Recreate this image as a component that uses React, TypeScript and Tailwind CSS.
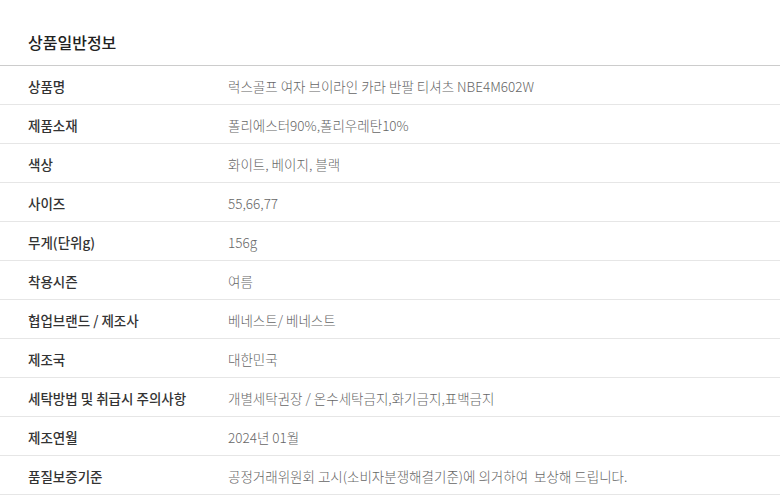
const rows: [string, string][] = [
  ['상품명', '럭스골프 여자 브이라인 카라 반팔 티셔츠 NBE4M602W'],
  ['제품소재', '폴리에스터90%,폴리우레탄10%'],
  ['색상', '화이트, 베이지, 블랙'],
  ['사이즈', '55,66,77'],
  ['무게(단위g)', '156g'],
  ['착용시즌', '여름'],
  ['협업브랜드 / 제조사', '베네스트/ 베네스트'],
  ['제조국', '대한민국'],
  ['세탁방법 및 취급시 주의사항', '개별세탁권장 / 온수세탁금지,화기금지,표백금지'],
  ['제조연월', '2024년 01월'],
  ['품질보증기준', '공정거래위원회 고시(소비자분쟁해결기준)에 의거하여  보상해 드립니다.'],
];

export default function App() {
  return (
    <div className="w-[780px] bg-white font-['Noto_Sans_CJK_KR','Noto_Sans',sans-serif]">
      <div className="px-[28px] pt-[32px] pb-[12px]">
        <h2 className="text-[16px] leading-[21px] font-medium text-[#222]">상품일반정보</h2>
      </div>
      <div className="border-t border-[#cccccc]">
        {rows.map(([label, value]) => (
          <div key={label} className="flex h-[39px] items-center border-b border-[#e6e6e6] text-[13.5px] pt-[2px]">
            <div className="w-[228px] pl-[28px] font-medium text-[#333]">{label}</div>
            <div className="flex-1 font-light text-[#666] whitespace-pre">{value}</div>
          </div>
        ))}
      </div>
    </div>
  );
}
